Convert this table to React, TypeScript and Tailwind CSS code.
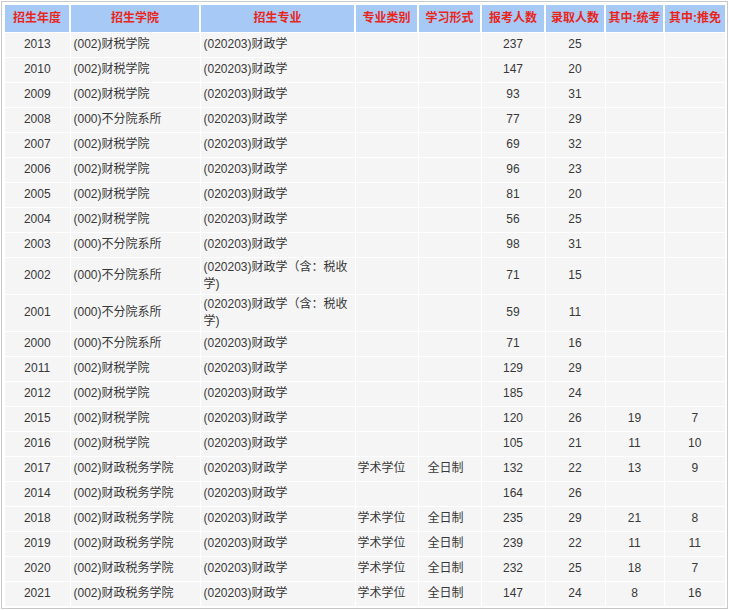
const headers = ['招生年度', '招生学院', '招生专业', '专业类别', '学习形式', '报考人数', '录取人数', '其中:统考', '其中:推免'];
const widths = ['w-[65px]', 'w-[130px]', 'w-[155px]', 'w-[63px]', 'w-[63px]', 'w-[64px]', 'w-[60px]', 'w-[59px]', 'w-[61px]'];

const SW = '(002)财税学院';
const BF = '(000)不分院系所';
const CZ = '(002)财政税务学院';
const ZY = '(020203)财政学';
const ZY2 = '(020203)财政学（含：税收学)';

type Row = [string, string, string, string, string, string, string, string, string];

const rows: Row[] = [
  ['2013', SW, ZY, '', '', '237', '25', '', ''],
  ['2010', SW, ZY, '', '', '147', '20', '', ''],
  ['2009', SW, ZY, '', '', '93', '31', '', ''],
  ['2008', BF, ZY, '', '', '77', '29', '', ''],
  ['2007', SW, ZY, '', '', '69', '32', '', ''],
  ['2006', SW, ZY, '', '', '96', '23', '', ''],
  ['2005', SW, ZY, '', '', '81', '20', '', ''],
  ['2004', SW, ZY, '', '', '56', '25', '', ''],
  ['2003', BF, ZY, '', '', '98', '31', '', ''],
  ['2002', BF, ZY2, '', '', '71', '15', '', ''],
  ['2001', BF, ZY2, '', '', '59', '11', '', ''],
  ['2000', BF, ZY, '', '', '71', '16', '', ''],
  ['2011', SW, ZY, '', '', '129', '29', '', ''],
  ['2012', SW, ZY, '', '', '185', '24', '', ''],
  ['2015', SW, ZY, '', '', '120', '26', '19', '7'],
  ['2016', SW, ZY, '', '', '105', '21', '11', '10'],
  ['2017', CZ, ZY, '学术学位', '全日制', '132', '22', '13', '9'],
  ['2014', CZ, ZY, '', '', '164', '26', '', ''],
  ['2018', CZ, ZY, '学术学位', '全日制', '235', '29', '21', '8'],
  ['2019', CZ, ZY, '学术学位', '全日制', '239', '22', '11', '11'],
  ['2020', CZ, ZY, '学术学位', '全日制', '232', '25', '18', '7'],
  ['2021', CZ, ZY, '学术学位', '全日制', '147', '24', '8', '16'],
];

// alignment per column
const align = [
  'text-center',
  'text-left pl-[3px]',
  'text-left pl-[3px] pr-[4px]',
  'text-left pl-[2px]',
  'text-left pl-[9px]',
  'text-center',
  'text-center',
  'text-center',
  'text-center',
];

export default function App() {
  return (
    <div className="bg-white w-[729px] h-[610px] p-[1px]" style={{ fontFamily: '"Liberation Sans", "Noto Sans CJK SC", sans-serif' }}>
      <div className="w-[727px] border border-[#c9c9c9] pt-[3px] pl-[3px] pr-[2px] pb-[1px]">
        <table className="w-[720px] table-fixed border-collapse text-[12px] text-[#383838]">
          <colgroup>
            {widths.map((w, i) => (
              <col key={i} className={w} />
            ))}
          </colgroup>
          <thead>
            <tr>
              {headers.map((h) => (
                <th
                  key={h}
                  className="h-[27px] bg-[#a6c9f6] border-[2px] border-white border-t-0 border-b-[1px] text-center font-bold text-[#e8261c] leading-[17px] p-0 first:border-l-0 last:border-r-0"
                >
                  {h}
                </th>
              ))}
            </tr>
          </thead>
          <tbody>
            {rows.map((r, ri) => (
              <tr key={ri}>
                {r.map((c, ci) => (
                  <td
                    key={ci}
                    className={`h-[25px] bg-[#f5f5f5] border border-white first:border-l-0 last:border-r-0 py-[1px] leading-[17px] align-middle ${align[ci]}`}
                  >
                    {c}
                  </td>
                ))}
              </tr>
            ))}
          </tbody>
        </table>
      </div>
    </div>
  );
}
